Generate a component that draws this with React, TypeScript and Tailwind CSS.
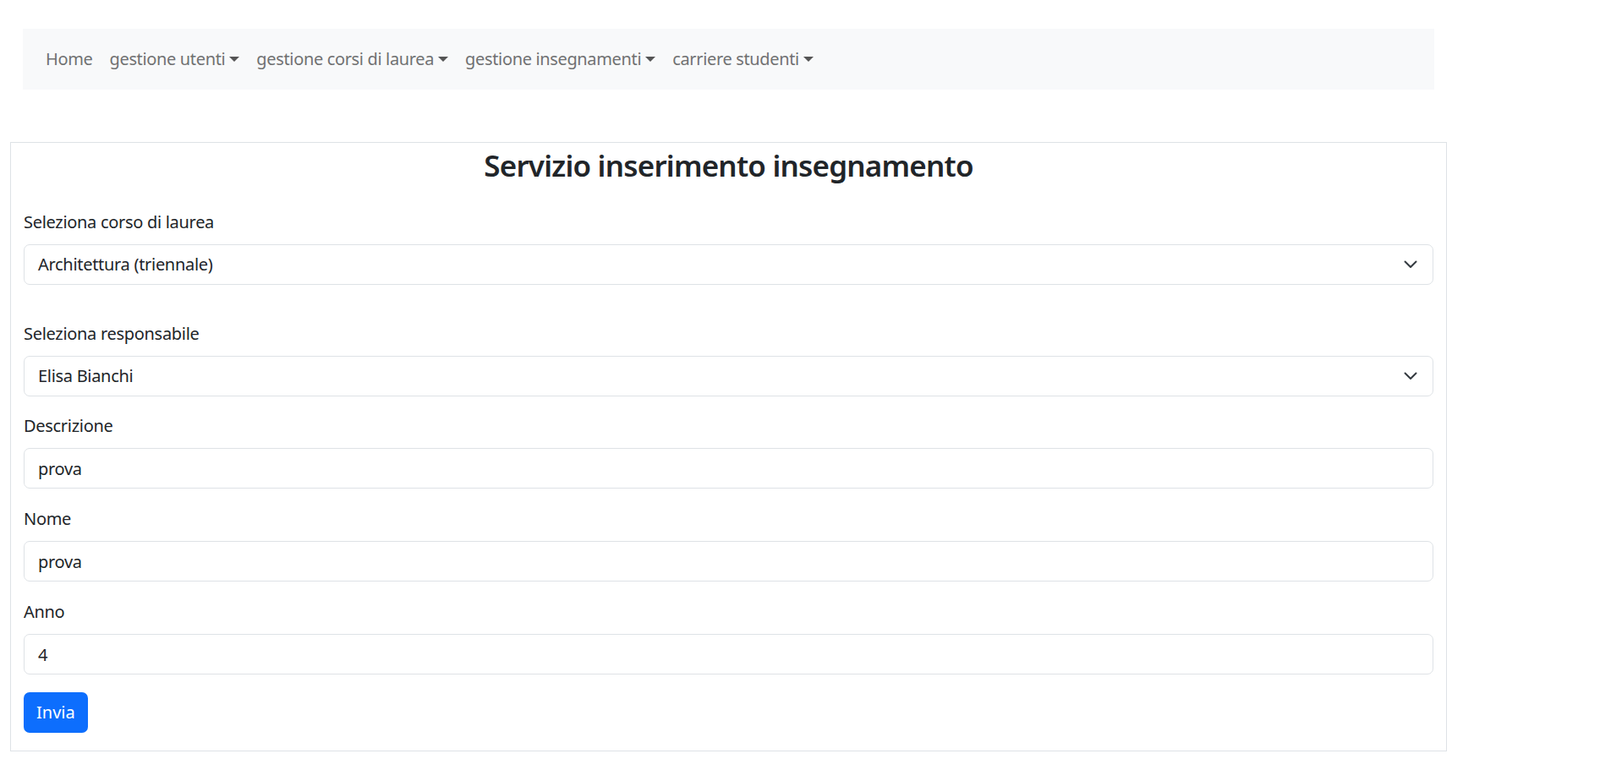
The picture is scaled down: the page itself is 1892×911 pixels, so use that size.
import React from "react";

const FONT = "font-['Noto_Sans',sans-serif]";

const navItems = [
  { label: "Home", caret: false },
  { label: "gestione utenti", caret: true },
  { label: "gestione corsi di laurea", caret: true },
  { label: "gestione insegnamenti", caret: true },
  { label: "carriere studenti", caret: true },
];

const Chevron = () => (
  <svg
    width="16"
    height="10"
    viewBox="0 0 16 10"
    fill="none"
    className="absolute right-[18px] top-1/2 -translate-y-1/2"
  >
    <path
      d="M1.5 1.5 8 8l6.5-6.5"
      stroke="#343a40"
      strokeWidth="2"
      strokeLinecap="round"
      strokeLinejoin="round"
    />
  </svg>
);

const Label = ({ children }: { children: React.ReactNode }) => (
  <label className="block text-[20px] leading-[30px] tracking-[-0.3px] text-[#212529] mb-[11px]">
    {children}
  </label>
);

const SelectBox = ({ value }: { value: string }) => (
  <div className="relative h-[48px] w-full border border-[#dee2e6] rounded-[7px] bg-white flex items-center pl-[16px] text-[20px] tracking-[-0.3px] text-[#212529]">
    {value}
    <Chevron />
  </div>
);

const TextInput = ({ value }: { value: string }) => (
  <input
    readOnly
    value={value}
    className="block h-[48px] w-full border border-[#dee2e6] rounded-[7px] bg-white pl-[16px] text-[20px] tracking-[-0.3px] text-[#212529] outline-none"
  />
);

export default function App() {
  return (
    <div className={`min-h-screen bg-white ${FONT}`}>
      {/* Navbar */}
      <nav className="ml-[27px] mt-[34px] w-[1669px] h-[72px] bg-[#f8f9fa] flex items-center pl-[17px]">
        {navItems.map((item) => (
          <span
            key={item.label}
            className="flex items-center px-[10px] text-[20px] leading-[30px] tracking-[-0.35px] text-[#707172]"
          >
            {item.label}
            {item.caret && (
              <span className="ml-[5px] inline-block w-0 h-0 border-l-[6px] border-r-[6px] border-t-[6px] border-l-transparent border-r-transparent border-t-[#555]" />
            )}
          </span>
        ))}
      </nav>

      {/* Form card */}
      <div className="ml-[12px] mt-[62px] w-[1699px] border border-[#dee2e6] px-[15px] pt-[3px] pb-[21px]">
        <h2 className="text-center text-[35px] leading-[48px] font-semibold tracking-[-0.8px] text-[#212529]">
          Servizio inserimento insegnamento
        </h2>

        <div className="mt-[28px]">
          <Label>Seleziona corso di laurea</Label>
          <SelectBox value="Architettura (triennale)" />
        </div>

        <div className="mt-[43px]">
          <Label>Seleziona responsabile</Label>
          <SelectBox value="Elisa Bianchi" />
        </div>

        <div className="mt-[20px]">
          <Label>Descrizione</Label>
          <TextInput value="prova" />
        </div>

        <div className="mt-[21px]">
          <Label>Nome</Label>
          <TextInput value="prova" />
        </div>

        <div className="mt-[21px]">
          <Label>Anno</Label>
          <TextInput value="4" />
        </div>

        <button className="mt-[21px] h-[48px] px-[15px] rounded-[7px] bg-[#0d6efd] text-white text-[20px] leading-[30px]">
          Invia
        </button>
      </div>
    </div>
  );
}
